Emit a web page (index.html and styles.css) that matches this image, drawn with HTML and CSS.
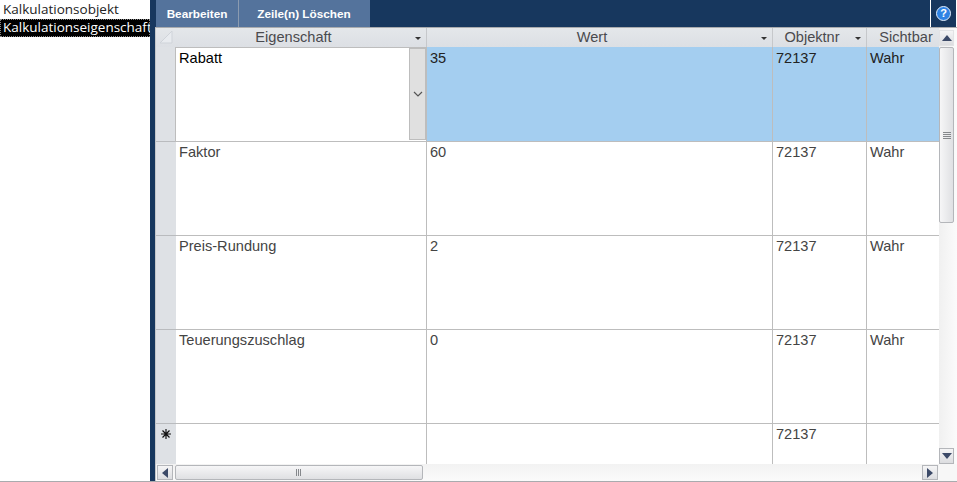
FILE: index.html
```html
<!DOCTYPE html>
<html>
<head>
    <title>Kalkulation</title>
    <meta charset="UTF-8">
    <link rel="stylesheet" href="styles.css">
</head>
<body>
    <div class="sidebar">
        <div class="nav-item">Kalkulationsobjekt</div>
        <div class="nav-item selected">Kalkulationseigenschaft</div>
    </div>

    <div class="main">
        <div class="toolbar">
            <button class="tool-btn btn-edit">Bearbeiten</button>
            <button class="tool-btn btn-delete">Zeile(n) Löschen</button>
            <div class="toolbar-fill"></div>
            <div class="help-box"><span class="help-icon">?</span></div>
        </div>

        <div class="content">
            <div class="grid-area">
                <div class="grid">
                    <div class="head selector-head"><svg width="16" height="16" viewBox="0 0 16 16"><path d="M2 15 L14 3 L14 15 Z" fill="#e8ebef" stroke="#cfd3d9"/></svg></div>
                    <div class="head">Eigenschaft<span class="sort"></span></div>
                    <div class="head">Wert<span class="sort"></span></div>
                    <div class="head">Objektnr<span class="sort"></span></div>
                    <div class="head">Sichtbar<span class="sort"></span></div>

                    <div class="selector"></div>
                    <div class="cell combo"><span class="combo-text">Rabatt</span>
                        <span class="combo-btn"><svg width="10" height="6" viewBox="0 0 10 6"><path d="M1 1 L5 5 L9 1" fill="none" stroke="#555" stroke-width="1.2"/></svg></span>
                    </div>
                    <div class="cell active">35</div>
                    <div class="cell active">72137</div>
                    <div class="cell active">Wahr</div>

                    <div class="selector"></div>
                    <div class="cell">Faktor</div>
                    <div class="cell">60</div>
                    <div class="cell">72137</div>
                    <div class="cell">Wahr</div>

                    <div class="selector"></div>
                    <div class="cell">Preis-Rundung</div>
                    <div class="cell">2</div>
                    <div class="cell">72137</div>
                    <div class="cell">Wahr</div>

                    <div class="selector"></div>
                    <div class="cell">Teuerungszuschlag</div>
                    <div class="cell">0</div>
                    <div class="cell">72137</div>
                    <div class="cell">Wahr</div>

                    <div class="selector new-row"><svg width="10" height="10" viewBox="0 0 10 10"><path d="M5 0 V10 M0 5 H10 M1.5 1.5 L8.5 8.5 M8.5 1.5 L1.5 8.5" fill="none" stroke="#111" stroke-width="1.2"/></svg></div>
                    <div class="cell last"></div>
                    <div class="cell last"></div>
                    <div class="cell last">72137</div>
                    <div class="cell last"></div>
                </div>

                <div class="hscroll">
                    <span class="sb-btn"><svg width="6" height="10" viewBox="0 0 6 10"><path d="M6 0 L0 5 L6 10 Z" fill="#3c4a68"/></svg></span>
                    <span class="h-thumb"><span class="grip-v"></span></span>
                    <span class="h-track"></span>
                    <span class="sb-btn"><svg width="6" height="10" viewBox="0 0 6 10"><path d="M0 0 L6 5 L0 10 Z" fill="#3c4a68"/></svg></span>
                </div>
            </div>

            <div class="vscroll">
                <span class="sb-btn v-btn v-up"><svg width="10" height="6" viewBox="0 0 10 6"><path d="M0 6 L5 0 L10 6 Z" fill="#3c4a68"/></svg></span>
                <span class="v-thumb"><span class="grip-h"></span></span>
                <span class="v-track"></span>
                <span class="sb-btn v-btn"><svg width="10" height="6" viewBox="0 0 10 6"><path d="M0 0 L5 6 L10 0 Z" fill="#3c4a68"/></svg></span>
                <span class="v-corner"></span>
            </div>
        </div>
    </div>
</body>
</html>
```

FILE: styles.css
```css
html, body {
    margin: 0;
    padding: 0;
}

body {
    display: flex;
    width: 957px;
    height: 482px;
    box-sizing: border-box;
    overflow: hidden;
    background-color: white;
    border-bottom: 1px solid #a9abae;
    font-family: "Liberation Sans", Arial, sans-serif;
}

.sidebar {
    width: 150px;
    flex: none;
    padding-top: 1px;
    font-family: "Open Sans", "Noto Sans", sans-serif;
    font-size: 13.5px;
    color: #222;
    overflow: hidden;
}

.nav-item {
    height: 18px;
    line-height: 17px;
    padding-left: 3px;
    white-space: nowrap;
    box-sizing: border-box;
}

.nav-item.selected {
    background-color: black;
    color: white;
    outline: 1px dotted #888;
    outline-offset: -1px;
}

.main {
    flex: 1;
    display: flex;
    flex-direction: column;
    min-width: 0;
    border-left: 5px solid #17375e;
    background-color: #17375e;
}

.toolbar {
    height: 27px;
    flex: none;
    display: flex;
    padding-left: 1px;
    box-sizing: border-box;
}

.tool-btn {
    height: 27px;
    padding: 0;
    border: none;
    border-right: 1px solid #8b9bb0;
    background-color: #54739c;
    color: white;
    font-family: "Liberation Sans", Arial, sans-serif;
    font-size: 11.75px;
    font-weight: bold;
}

.btn-edit {
    width: 83px;
}

.btn-delete {
    width: 131px;
    border-right-color: #54739c;
}

.toolbar-fill {
    flex: 1;
}

.help-box {
    width: 27px;
    height: 28px;
    box-sizing: border-box;
    border-left: 1px solid white;
    border-right: 1px solid white;
    border-bottom: 1px solid white;
    display: flex;
    align-items: center;
    justify-content: center;
}

.help-icon {
    width: 13px;
    height: 13px;
    border-radius: 50%;
    background-color: #2f83e4;
    border: 1px solid #e4effc;
    color: white;
    font-size: 11px;
    font-weight: bold;
    line-height: 13px;
    text-align: center;
}

.content {
    flex: 1;
    display: flex;
    min-height: 0;
    background-color: white;
    border-top: 1px solid #a9abae;
    border-left: 1px solid #c4c6c9;
}

.grid-area {
    width: 783px;
    flex: none;
    display: flex;
    flex-direction: column;
    overflow: hidden;
}

.grid {
    flex: 1;
    display: grid;
    grid-template-columns: 20px 251px 346px 94px 94px;
    grid-template-rows: 19px 95px 94px 94px 94px 1fr;
    min-height: 0;
    width: 805px;
    font-size: 14.6px;
    color: #444;
}

.head {
    position: relative;
    background: linear-gradient(#e4e7ea, #dcdfe4);
    border-right: 1px solid #c6c8cb;
    padding-right: 15px;
    text-align: center;
    line-height: 19px;
    color: #4a4a4e;
    box-sizing: border-box;
}

.selector-head {
    padding: 0;
    border-right: none;
    line-height: 0;
}

.sort {
    position: absolute;
    right: 5px;
    top: 9px;
    border-left: 3px solid transparent;
    border-right: 3px solid transparent;
    border-top: 3px solid #333;
}

.selector {
    background-color: #dee1e5;
    border-bottom: 1px solid #b9bbbe;
    box-sizing: border-box;
}

.new-row {
    border-bottom: none;
    display: flex;
    justify-content: center;
    align-items: flex-start;
    padding-top: 5px;
    padding-right: 1px;
}

.cell {
    border-right: 1px solid #bdbdbd;
    border-bottom: 1px solid #bdbdbd;
    padding: 2px 3px;
    box-sizing: border-box;
    line-height: 16px;
    background-color: white;
}

.cell.active {
    padding-top: 3px;
    background-color: #a4cef0;
    color: #222;
}

.cell.last {
    border-bottom: none;
}

.combo {
    display: flex;
    justify-content: space-between;
    margin-left: -1px;
    padding-right: 0;
    border-left: 1px solid #bdbdbd;
    border-top: 1px solid #bdbdbd;
    padding-top: 2px;
    padding-left: 3px;
    color: black;
}

.combo-btn {
    width: 17px;
    margin-top: -2px;
    margin-bottom: -1px;
    background-color: #e0e0e0;
    border: 1px solid #bdbdbd;
    display: flex;
    align-items: center;
    justify-content: center;
    box-sizing: border-box;
}

.hscroll {
    height: 17px;
    flex: none;
    display: flex;
    align-items: center;
    gap: 2px;
    padding: 0 1px 0 1px;
    background: linear-gradient(#f2f2f2, #fbfbfb);
    box-sizing: border-box;
}

.sb-btn {
    width: 16px;
    height: 15px;
    flex: none;
    display: flex;
    align-items: center;
    justify-content: center;
    box-sizing: border-box;
    border: 1px solid #b4b6ba;
    background: linear-gradient(#f5f5f6, #dcdde0);
}

.h-thumb {
    width: 248px;
    height: 15px;
    flex: none;
    display: flex;
    align-items: center;
    justify-content: center;
    box-sizing: border-box;
    border: 1px solid #b4b6ba;
    border-radius: 2px;
    background: linear-gradient(#f6f6f7, #dfe0e3);
}

.h-track {
    flex: 1;
}

.grip-v {
    width: 6px;
    height: 7px;
    background: repeating-linear-gradient(90deg, #85888c 0 1px, transparent 1px 2px);
}

.vscroll {
    flex: 1;
    display: flex;
    flex-direction: column;
    align-items: flex-start;
    background: linear-gradient(90deg, #f0f0f0, #fbfbfb);
}

.v-btn {
    width: 15px;
    height: 16px;
}

.v-up {
    margin-top: 2px;
    margin-bottom: 1px;
    border-color: #e2e3e5;
}

.v-thumb {
    width: 15px;
    height: 176px;
    flex: none;
    display: flex;
    align-items: center;
    justify-content: center;
    box-sizing: border-box;
    border: 1px solid #b4b6ba;
    border-radius: 2px;
    background: linear-gradient(90deg, #f6f6f7, #dfe0e3);
}

.v-track {
    flex: 1;
}

.grip-h {
    width: 8px;
    height: 7px;
    background: repeating-linear-gradient(180deg, #85888c 0 1px, transparent 1px 2px);
}

.v-corner {
    width: 100%;
    height: 17px;
    flex: none;
    background-color: #f7f7f7;
}
```
